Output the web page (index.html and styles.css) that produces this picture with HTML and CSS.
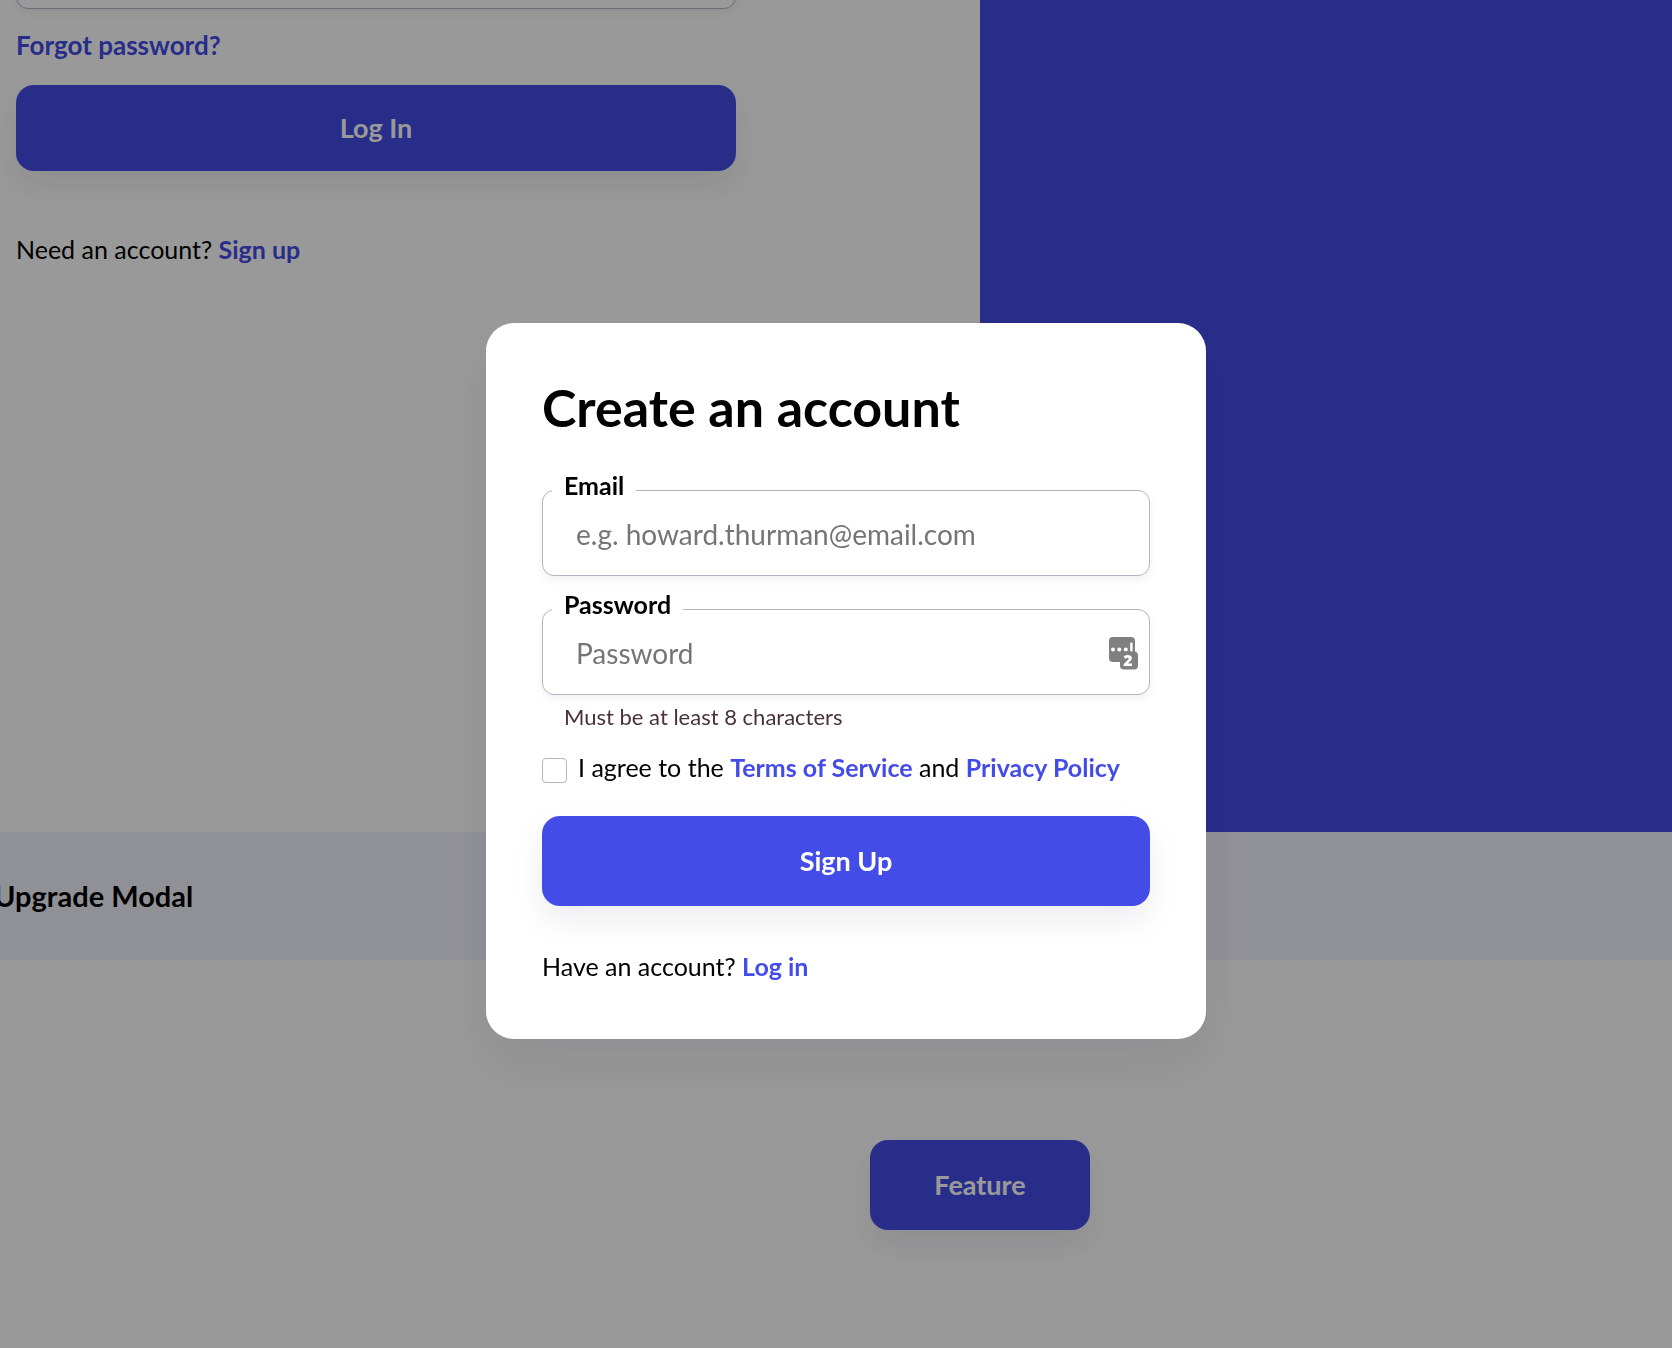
FILE: index.html
```html
<!DOCTYPE html>
<html lang="en">
<head>
  <meta charset="utf-8">
  <meta name="viewport" content="width=device-width, initial-scale=1">
  <title>Create an account</title>
  <link rel="stylesheet" href="styles.css">
</head>
<body>
  <main class="page">
    <section class="login">
      <form class="login-form">
        <input class="input" type="password" aria-label="Login password">
        <a class="link forgot" href="#">Forgot password?</a>
        <button class="button button-login" type="button">Log In</button>
        <p class="switch">Need an account? <a class="link" href="#">Sign up</a></p>
      </form>
      <div class="login-art"></div>
    </section>
    <header class="band">
      <h2 class="band-title">Upgrade Modal</h2>
    </header>
    <section class="demo">
      <button class="button button-feature" type="button">Feature</button>
    </section>
  </main>

  <div class="overlay">
    <div class="modal" role="dialog" aria-modal="true" aria-labelledby="modal-title">
      <h1 class="modal-title" id="modal-title">Create an account</h1>
      <form class="signup-form">
        <div class="field">
          <label class="label" for="email">Email</label>
          <input class="input" id="email" type="email" placeholder="e.g. howard.thurman@email.com">
        </div>
        <div class="field">
          <label class="label" for="password">Password</label>
          <input class="input" id="password" type="password" placeholder="Password" aria-describedby="password-hint">
          <svg class="manager" viewBox="0 0 30 33" aria-hidden="true">
            <rect x="0" y="0" width="26" height="25" rx="4" fill="#808080"/>
            <g fill="#fff">
              <circle cx="4" cy="12.5" r="2"/>
              <circle cx="10.3" cy="12.5" r="2"/>
              <circle cx="16.8" cy="12.5" r="2"/>
              <rect x="21.2" y="5.5" width="2.4" height="9.5" rx="1"/>
            </g>
            <rect x="11" y="14.5" width="18" height="18" rx="4" fill="#808080"/>
            <text class="manager-count" x="19" y="29" text-anchor="middle">2</text>
          </svg>
        </div>
        <p class="hint" id="password-hint">Must be at least 8 characters</p>
        <div class="agree">
          <input class="checkbox" id="agree" type="checkbox">
          <label for="agree">I agree to the <a class="link" href="#">Terms of Service</a> and <a class="link" href="#">Privacy Policy</a></label>
        </div>
        <button class="button button-signup" type="button">Sign Up</button>
      </form>
      <p class="switch">Have an account? <a class="link" href="#">Log in</a></p>
    </div>
  </div>
</body>
</html>
```
FILE: styles.css
```css
:root {
  --blue: #444ce7;
  --line: #b4b4c2;
}

* {
  box-sizing: border-box;
}

body {
  margin: 0;
  background: #fff;
  color: #000;
  font: 400 25px/32px Lato, "Liberation Sans", sans-serif;
  overflow: hidden;
}

h1, h2, p {
  margin: 0;
}

.link {
  color: var(--blue);
  font-weight: 700;
  text-decoration: none;
}

.input {
  width: 100%;
  height: 86px;
  padding: 2px 33px 0;
  border: 1px solid var(--line);
  border-radius: 12px;
  background: #fff;
  box-shadow: 0 4px 8px rgba(30, 30, 90, 0.06);
  font: 400 28px/34px Lato, "Liberation Sans", sans-serif;
}

.input::placeholder {
  color: #757575;
  opacity: 1;
}

.button {
  height: 90px;
  border: 0;
  border-radius: 18px;
  background: var(--blue);
  box-shadow: 0 14px 32px rgba(20, 20, 60, 0.08);
  color: #fff;
  font: 700 27px/34px Lato, "Liberation Sans", sans-serif;
}

/* Page behind the modal */

.page {
  display: flex;
  flex-direction: column;
  min-height: 100vh;
}

.login {
  display: grid;
  grid-template-columns: 980fr 692fr;
  height: 832px;
}

.login-form {
  display: flex;
  flex-direction: column;
  max-width: 752px;
  margin-top: -77px;
  padding: 0 16px;
}

.login-art {
  background: var(--blue);
}

.forgot {
  margin: 20px 0 24px;
  font-size: 26px;
}

.button-login {
  height: 86px;
  margin-bottom: 62px;
}

.band {
  display: flex;
  align-items: center;
  height: 128px;
  background: #f1f2fb;
}

.band-title {
  margin-left: -6px;
  font-size: 29px;
  line-height: 36px;
}

.demo {
  display: flex;
  justify-content: center;
  padding: 180px 0 118px 288px;
}

.button-feature {
  width: 220px;
}

/* Sign-up modal */

.overlay {
  position: fixed;
  inset: 0;
  display: flex;
  align-items: center;
  justify-content: center;
  padding: 14px 0 0 20px;
  background: rgba(0, 0, 0, 0.4);
}

.modal {
  width: 100%;
  max-width: 720px;
  padding: 56px 56px 57px;
  border-radius: 28px;
  background: #fff;
  box-shadow: 0 28px 56px rgba(20, 20, 50, 0.08);
}

.modal-title {
  margin-bottom: 55px;
  font-size: 52px;
  line-height: 56px;
}

.signup-form {
  display: flex;
  flex-direction: column;
  margin-bottom: 44px;
}

.field {
  position: relative;
}

.field + .field {
  margin-top: 33px;
}

.field .input {
  display: block;
}

.label {
  position: absolute;
  top: -19px;
  left: 10px;
  padding: 0 12px;
  background: #fff;
  line-height: 28px;
  font-weight: 700;
}

.manager {
  position: absolute;
  top: 28px;
  right: 11px;
  width: 30px;
  height: 33px;
}

.manager-count {
  fill: #fff;
  font: 800 16px "Open Sans", "Liberation Sans", sans-serif;
}

.hint {
  margin: 8px 0 20px 22px;
  color: #4a3338;
  font-size: 22px;
  line-height: 28px;
}

.agree {
  display: flex;
  align-items: flex-end;
  gap: 11px;
  margin-bottom: 33px;
}

.checkbox {
  appearance: none;
  flex: none;
  width: 25px;
  height: 25px;
  margin: 0;
  border: 1px solid var(--line);
  border-radius: 4px;
  background: #fff;
}
```
